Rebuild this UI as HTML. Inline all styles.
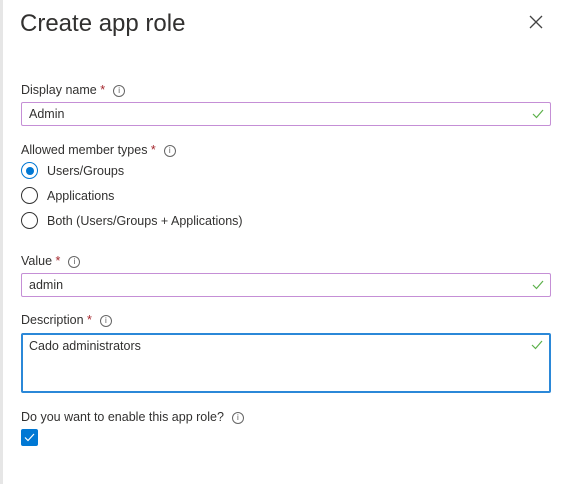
<!DOCTYPE html>
<html><head><style>
body{margin:0;width:567px;height:501px;background:#fff;font-family:"Liberation Sans",sans-serif;color:#323130;position:relative;overflow:hidden}
.bar{position:absolute;left:0;top:0;width:3px;height:484px;background:#e6e6e6}
.a{position:absolute;white-space:nowrap}
.lbl{font-size:12.5px;color:#323130}
.req{color:#a4262c}
.info{display:inline-block;width:10px;height:10px;border:1px solid #666;border-radius:50%;font-size:8px;line-height:10px;text-align:center;color:#555;margin-left:8px;vertical-align:1px}
.inp{position:absolute;left:21px;width:530px;border:1px solid #c58fd6;border-radius:2px;font-size:12.5px;box-sizing:border-box;padding-left:7px}
.ck{position:absolute;right:6px;color:#5db14b;font-size:13px}
.rad{position:absolute;left:21px;width:17px;height:17px;border:1px solid #333;border-radius:50%;box-sizing:border-box}
</style></head><body>
<div class="bar"></div>
<div class="a" style="left:20px;top:10px;font-size:24px;color:#323130">Create app role</div>
<svg class="a" style="left:529px;top:15px" width="14" height="14"><path d="M1 1L13 13M13 1L1 13" stroke="#444" stroke-width="1.3"/></svg>

<div class="a lbl" style="left:21px;top:83px">Display name <span class="req">*</span><span class="info">i</span></div>
<div class="inp" style="top:102px;height:24px;line-height:22px">Admin<svg class="ck" style="top:6px" width="12" height="10"><path d="M1 5L4.5 8.5L11 1" stroke="#5db14b" fill="none" stroke-width="1.2"/></svg></div>

<div class="a lbl" style="left:21px;top:143px">Allowed member types <span class="req">*</span><span class="info">i</span></div>
<div class="rad" style="top:162px;border-color:#0078d4"><div style="position:absolute;left:3.5px;top:3.5px;width:8px;height:8px;border-radius:50%;background:#0078d4"></div></div>
<div class="a lbl" style="left:47px;top:164px">Users/Groups</div>
<div class="rad" style="top:187px"></div>
<div class="a lbl" style="left:47px;top:189px">Applications</div>
<div class="rad" style="top:212px"></div>
<div class="a lbl" style="left:47px;top:214px">Both (Users/Groups + Applications)</div>

<div class="a lbl" style="left:21px;top:254px">Value <span class="req">*</span><span class="info">i</span></div>
<div class="inp" style="top:273px;height:24px;line-height:22px">admin<svg class="ck" style="top:6px" width="12" height="10"><path d="M1 5L4.5 8.5L11 1" stroke="#5db14b" fill="none" stroke-width="1.2"/></svg></div>

<div class="a lbl" style="left:21px;top:313px">Description <span class="req">*</span><span class="info">i</span></div>
<div class="inp" style="top:333px;height:60px;border:2px solid #2b88d8;line-height:22px;padding-left:6px">Cado administrators<svg class="ck" style="top:5px" width="12" height="10"><path d="M1 5L4.5 8.5L11 1" stroke="#5db14b" fill="none" stroke-width="1.2"/></svg></div>

<div class="a lbl" style="left:21px;top:410px">Do you want to enable this app role?<span class="info">i</span></div>
<div class="a" style="left:21px;top:429px;width:17px;height:17px;background:#0078d4;border-radius:2px"><svg width="17" height="17"><path d="M4 8.5L7 11.5L13 5" stroke="#fff" fill="none" stroke-width="1.2"/></svg></div>
</body></html>
